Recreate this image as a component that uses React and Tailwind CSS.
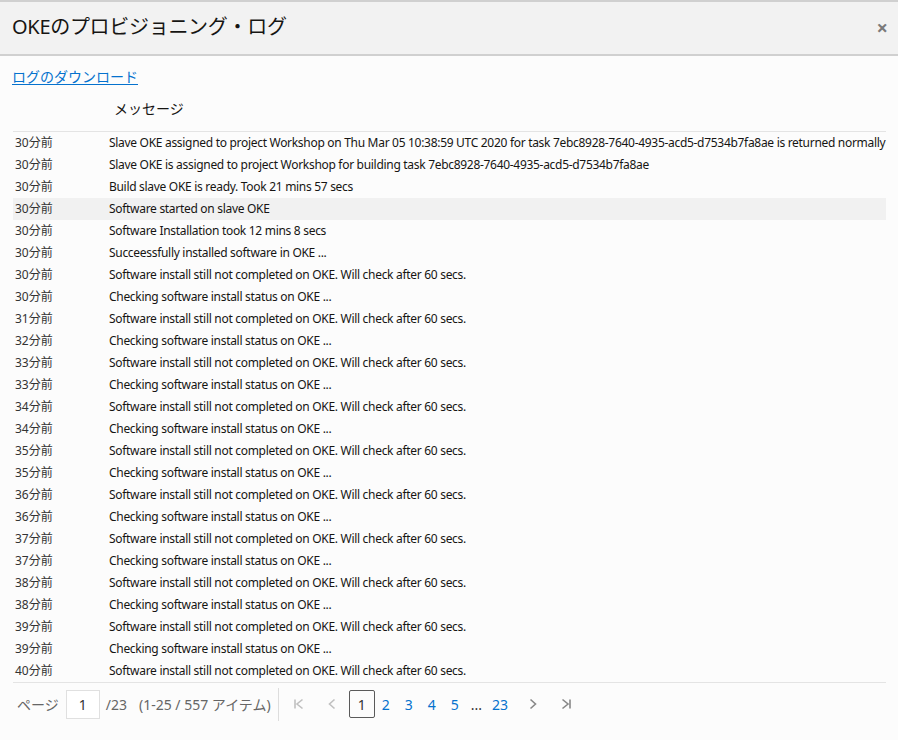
import React from 'react';

const CHECK = 'Checking software install status on OKE ...';
const STILL = 'Software install still not completed on OKE. Will check after 60 secs.';

const rows = [
  ['30分前', 'Slave OKE assigned to project Workshop on Thu Mar 05 10:38:59 UTC 2020 for task 7ebc8928-7640-4935-acd5-d7534b7fa8ae is returned normally'],
  ['30分前', 'Slave OKE is assigned to project Workshop for building task 7ebc8928-7640-4935-acd5-d7534b7fa8ae'],
  ['30分前', 'Build slave OKE is ready. Took 21 mins 57 secs'],
  ['30分前', 'Software started on slave OKE'],
  ['30分前', 'Software Installation took 12 mins 8 secs'],
  ['30分前', 'Succeessfully installed software in OKE ...'],
  ['30分前', STILL],
  ['30分前', CHECK],
  ['31分前', STILL],
  ['32分前', CHECK],
  ['33分前', STILL],
  ['33分前', CHECK],
  ['34分前', STILL],
  ['34分前', CHECK],
  ['35分前', STILL],
  ['35分前', CHECK],
  ['36分前', STILL],
  ['36分前', CHECK],
  ['37分前', STILL],
  ['37分前', CHECK],
  ['38分前', STILL],
  ['38分前', CHECK],
  ['39分前', STILL],
  ['39分前', CHECK],
  ['40分前', STILL],
];

const font = { fontFamily: '"Noto Sans", "Noto Sans CJK JP", sans-serif' };

export default function App() {
  return (
    <div className="w-[898px] h-[740px] bg-[#fcfcfc] text-[#161513] overflow-hidden" style={font}>
      {/* header */}
      <div className="h-[56px] bg-[#f2f2f2] border-t-2 border-b-2 border-[#d0d0d0] flex items-center justify-between pl-3 pr-[10px]">
        <h1 className="text-[20px] tracking-[-0.3px] text-[#161513] -mt-[2px]">OKEのプロビジョニング・ログ</h1>
        <button className="text-[#7a7a7a] text-[20px] leading-none font-bold">×</button>
      </div>

      <div className="pl-3 pr-3 pt-[8px]">
        <a href="#" className="text-[14px] text-[#0572ce] underline underline-offset-2">ログのダウンロード</a>

        <div className="mt-[10px] ml-px">
          <div className="h-[34px] flex items-start border-b border-[#e4e4e4] text-[14px]">
            <div className="w-[101px] shrink-0" />
            <div>メッセージ</div>
          </div>
          {rows.map(([time, msg], i) => (
            <div key={i} className={`h-[22px] flex items-center text-[12px] ${i === 3 ? 'bg-[#f1f1f1]' : ''}`}>
              <div className="w-[96px] shrink-0 pl-[2px] text-[#333]">{time}</div>
              <div className="whitespace-nowrap tracking-[-0.3px]">{msg}</div>
            </div>
          ))}
          <div className="border-t border-[#e4e4e4]" />
        </div>

        {/* pagination */}
        <div className="flex items-center h-[36px] mt-[3px] text-[14px] text-[#666]">
          <span className="ml-[5px]">ページ</span>
          <div className="ml-[7px] w-[34px] h-[29px] border border-[#e0e0e0] bg-white flex items-center justify-center text-[#333]">1</div>
          <span className="ml-[6px]">/23</span>
          <span className="ml-[12px]">(1-25 / 557 アイテム)</span>
          <div className="ml-[7px] w-px h-[33px] bg-[#ddd]" />
          <div className="flex items-center ml-[4px] text-[#0572ce]">
            <span className="w-[33px] flex justify-center text-[#c0c0c0]">
              <svg width="12" height="12" viewBox="0 0 12 12" fill="none" stroke="currentColor" strokeWidth="1.6">
                <path d="M2 1.5v9M9.5 1.5L4 6l5.5 4.5" />
              </svg>
            </span>
            <span className="w-[33px] flex justify-center text-[#c0c0c0]">
              <svg width="10" height="12" viewBox="0 0 10 12" fill="none" stroke="currentColor" strokeWidth="1.6">
                <path d="M7.5 1.5L2.5 6l5 4.5" />
              </svg>
            </span>
            <span className="w-[26px] h-[28px] border border-[#5a5a5a] rounded-[2px] flex items-center justify-center text-[#333]">1</span>
            <span className="ml-[7px]">2</span>
            <span className="ml-[15px]">3</span>
            <span className="ml-[15px]">4</span>
            <span className="ml-[15px]">5</span>
            <span className="ml-[12px] text-[#333]">...</span>
            <span className="ml-[10px]">23</span>
            <span className="ml-[20px] text-[#888]">
              <svg width="10" height="12" viewBox="0 0 10 12" fill="none" stroke="currentColor" strokeWidth="1.6">
                <path d="M2.5 1.5l5 4.5-5 4.5" />
              </svg>
            </span>
            <span className="ml-[22px] text-[#888]">
              <svg width="12" height="12" viewBox="0 0 12 12" fill="none" stroke="currentColor" strokeWidth="1.6">
                <path d="M10 1.5v9M2.5 1.5L8 6l-5.5 4.5" />
              </svg>
            </span>
          </div>
        </div>
      </div>
    </div>
  );
}
